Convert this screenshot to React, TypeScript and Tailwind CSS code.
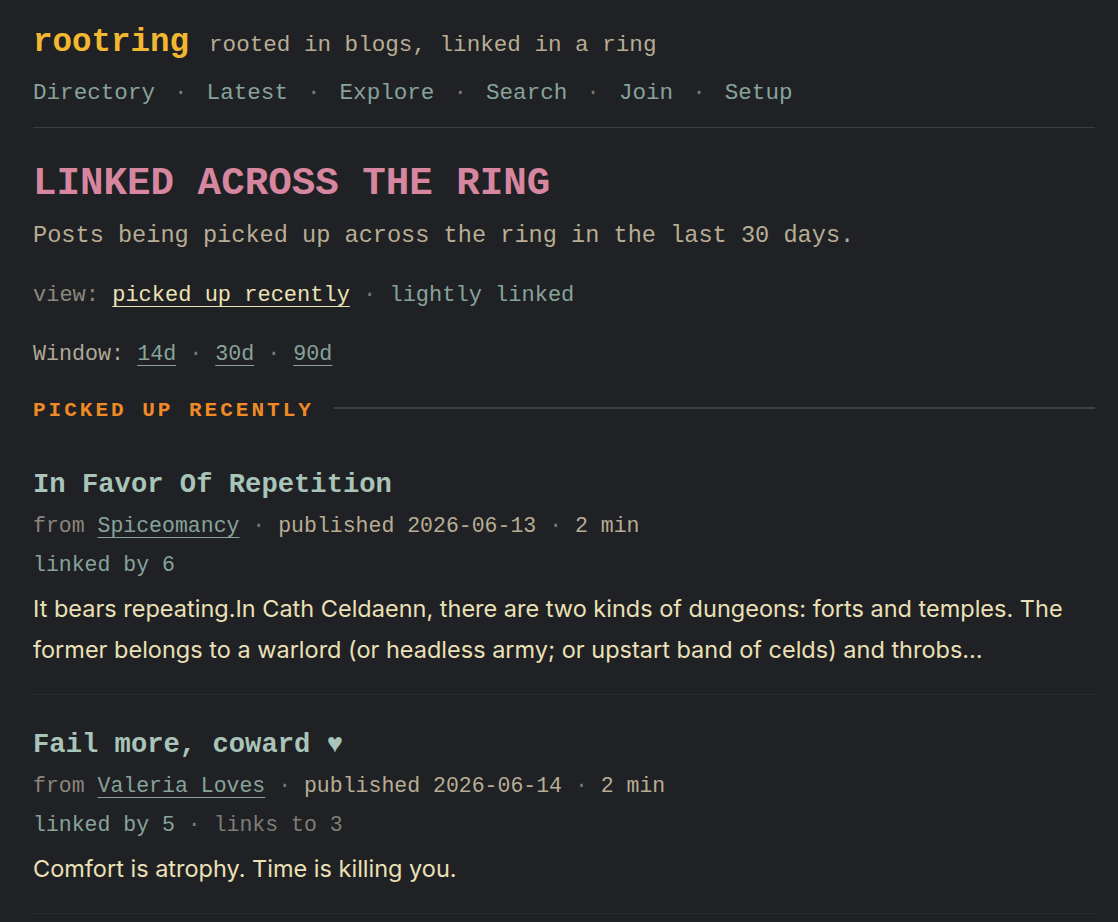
import React from 'react';

type Post = {
  title: string;
  source: string;
  published: string;
  minutes: number;
  linkedBy: number;
  linksTo?: number;
  excerpt: string;
};

const posts: Post[] = [
  {
    title: 'In Favor Of Repetition',
    source: 'Spiceomancy',
    published: '2026-06-13',
    minutes: 2,
    linkedBy: 6,
    excerpt:
      'It bears repeating.In Cath Celdaenn, there are two kinds of dungeons: forts and temples. The former belongs to a warlord (or headless army; or upstart band of celds) and throbs…',
  },
  {
    title: 'Fail more, coward ♥',
    source: 'Valeria Loves',
    published: '2026-06-14',
    minutes: 2,
    linkedBy: 5,
    linksTo: 3,
    excerpt: 'Comfort is atrophy. Time is killing you.',
  },
];

const navItems = ['Directory', 'Latest', 'Explore', 'Search', 'Join', 'Setup'];

const mono = "font-['Liberation_Mono','DejaVu_Sans_Mono',monospace]";

const Dot = () => <span className="text-[#7a7a72]"> · </span>;

const PostItem: React.FC<{ post: Post }> = ({ post }) => (
  <article className="pt-[30px] pb-[24px] border-b border-dotted border-[#313437]">
    <h3 className="text-[27.2px] leading-[40px] font-bold text-[#a9c4b9]">{post.title}</h3>
    <p className="mt-[3.5px] text-[21.5px] leading-[36px] text-[#b8ad94]">
      <span className="text-[#8c857c]">from </span>
      <a href="#" className="text-[#87a39a] underline underline-offset-[5px] decoration-1">
        {post.source}
      </a>
      <Dot />
      published {post.published}
      <Dot />
      {post.minutes} min
    </p>
    <p className="mt-[3px] text-[21.5px] leading-[36px] text-[#87a39a]">
      linked by {post.linkedBy}
      {post.linksTo !== undefined && (
        <span className="text-[#7d7d75]">
          {' · '}links to {post.linksTo}
        </span>
      )}
    </p>
    <p className="mt-[4.5px] font-['Inter','Noto_Sans',sans-serif] text-[23.5px] leading-[41px] text-[#ebe0b6]">
      {post.excerpt}
    </p>
  </article>
);

export default function App() {
  return (
    <div className={`min-h-[922px] bg-[#1f2124] ${mono}`}>
      <div className="w-[1062px] ml-[33px] pt-[23px]">
        {/* header */}
        <header className="pb-[16px] border-b border-[#3b3e41]">
          <div className="flex items-baseline">
            <a href="#" className="text-[32.5px] leading-[40px] font-bold text-[#f2b731]">
              rootring
            </a>
            <span className="ml-[20px] text-[22.6px] text-[#b8ad94]">rooted in blogs, linked in a ring</span>
          </div>
          <nav className="mt-[12px] flex text-[22.6px] leading-[36px] text-[#87a39a]">
            {navItems.map((item, i) => (
              <React.Fragment key={item}>
                {i > 0 && <span className="mx-[19px] text-[#7a7a72]">·</span>}
                <a href="#">{item}</a>
              </React.Fragment>
            ))}
          </nav>
        </header>

        <main>
          <h1 className="mt-[31.5px] text-[39.2px] leading-[48px] font-bold text-[#d6879f]">
            LINKED ACROSS THE RING
          </h1>
          <p className="mt-[10px] text-[23.6px] leading-[36px] text-[#b8ad94]">
            Posts being picked up across the ring in the last 30 days.
          </p>

          <p className="mt-[24.5px] text-[22px] leading-[36px] text-[#8c877e]">
            view:{' '}
            <a href="#" className="text-[#ece2b4] underline underline-offset-[5px] decoration-1">
              picked up recently
            </a>
            <Dot />
            <a href="#" className="text-[#87a39a]">
              lightly linked
            </a>
          </p>

          <p className="mt-[23px] text-[21.7px] leading-[36px] text-[#b0aa98]">
            Window:{' '}
            <a href="#" className="text-[#87a39a] underline underline-offset-[5px] decoration-1">
              14d
            </a>
            <Dot />
            <a href="#" className="text-[#87a39a] underline underline-offset-[5px] decoration-1">
              30d
            </a>
            <Dot />
            <a href="#" className="text-[#87a39a] underline underline-offset-[5px] decoration-1">
              90d
            </a>
          </p>

          <div className="mt-[21.5px] flex items-center gap-[20px]">
            <h2 className="text-[21px] leading-[32px] tracking-[3px] font-bold text-[#f08a24]">
              PICKED UP RECENTLY
            </h2>
            <div className="flex-1 h-[2px] -mt-[6px] bg-[#39423f]" />
          </div>

          <section className="mt-[8px]">
            {posts.map((p) => (
              <PostItem key={p.title} post={p} />
            ))}
          </section>
        </main>
      </div>
    </div>
  );
}
